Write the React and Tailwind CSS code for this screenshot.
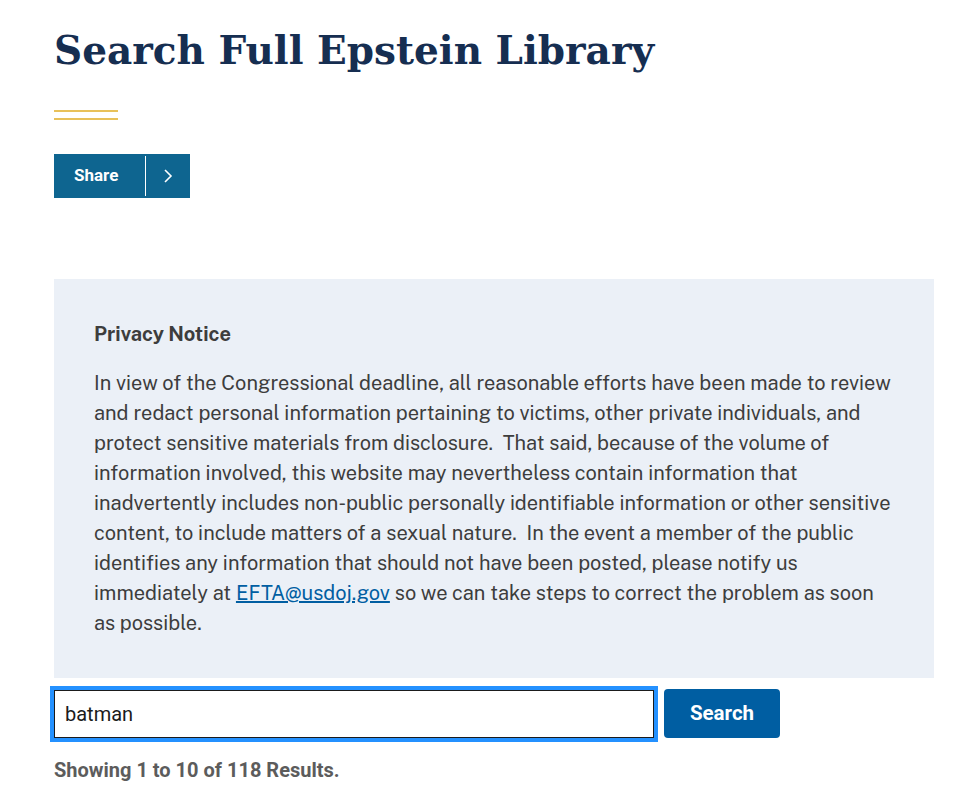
import { useState } from "react";

function App() {
  const [query, setQuery] = useState("batman");
  return (
    <div className="min-h-screen bg-white pl-[54px] pr-[42px] pt-[18px] font-['Public_Sans','Noto_Sans',sans-serif]">
      <h1 className="font-['DejaVu_Serif',serif] text-[39px] font-bold leading-[64px] text-[#162e51]">
        Search Full Epstein Library
      </h1>
      <div className="mt-[28px] flex w-16 flex-col gap-[6px]">
        <div className="h-[2px] bg-[#e8c15a]"></div>
        <div className="h-[2px] bg-[#e8c15a]"></div>
      </div>
      <div className="mt-[34px] flex h-[44px] w-[136px] items-center bg-[#0e6590] text-white">
        <span className="flex-1 pl-5 font-['Roboto',sans-serif] text-[17px] font-bold">Share</span>
        <span className="h-[40px] w-px bg-white"></span>
        <span className="flex w-[44px] items-center justify-center">
          <svg width="10" height="16" viewBox="0 0 10 16" fill="none" stroke="white" strokeWidth="1.6">
            <path d="M2 2l6 6-6 6" />
          </svg>
        </span>
      </div>
      <div className="mt-[81px] bg-[#ebf0f7] px-10 pb-10 pt-[40px] text-[#3d3d3d]">
        <h2 className="text-[20px] font-bold leading-[30px]">Privacy Notice</h2>
        <p className="mt-[19px] text-[20px] leading-[30px]">
          In view of the Congressional deadline, all reasonable efforts have been made to review and redact
          personal information pertaining to victims, other private individuals, and protect sensitive materials
          from disclosure.&nbsp; That said, because of the volume of information involved, this website may
          nevertheless contain information that inadvertently includes non-public personally identifiable
          information or other sensitive content, to include matters of a sexual nature.&nbsp; In the event a
          member of the public identifies any information that should not have been posted, please notify us
          immediately at{" "}
          <a href="#" className="text-[#005ea2] underline">
            EFTA@usdoj.gov
          </a>{" "}
          so we can take steps to correct the problem as soon as possible.
        </p>
      </div>
      <div className="mt-[11px] flex items-center gap-[10px]">
        <input
          value={query}
          onChange={(e) => setQuery(e.target.value)}
          className="h-[48px] w-[600px] border border-[#1b1b1b] px-[10px] font-['Roboto',sans-serif] text-[20px] text-[#1b1b1b] outline-4 outline-offset-0 outline-[#2491ff]"
        />
        <button className="h-[49px] w-[116px] rounded-[4px] bg-[#005ea2] font-['Roboto',sans-serif] text-[20.5px] font-bold text-white">
          Search
        </button>
      </div>
      <p className="mt-[17px] font-['Roboto',sans-serif] text-[20px] font-bold text-[#5c5c5c]">
        Showing 1 to 10 of 118 Results.
      </p>
    </div>
  );
}

export default App;
